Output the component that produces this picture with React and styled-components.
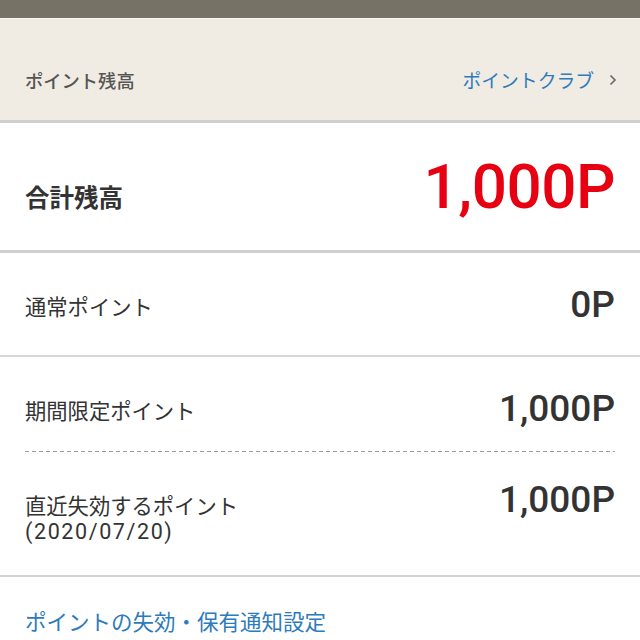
import React from "react";
import styled, { createGlobalStyle } from "styled-components";

const Global = createGlobalStyle`
  html, body { margin: 0; padding: 0; background: #fff; }
  body { font-family: "Noto Sans CJK JP", "Noto Sans", sans-serif; }
`;

const Page = styled.div`
  width: 640px;
  height: 640px;
  overflow: hidden;
  display: flex;
  flex-direction: column;
`;

const TopBar = styled.div`
  height: 18px;
  background: #777266;
  border-bottom: 1px solid #f9f6f0;
  flex-shrink: 0;
`;

const Header = styled.div`
  height: 104px;
  background: #f1ece3;
  display: flex;
  align-items: flex-end;
  justify-content: space-between;
  padding: 0 25px 27px 25px;
  box-sizing: border-box;
  border-bottom: 3px solid #cfcfcf;
  flex-shrink: 0;
`;

const HeaderTitle = styled.div`
  font-size: 18.3px;
  color: #555;
  font-weight: 500;
  line-height: 26px;
`;

const ClubLink = styled.a`
  font-size: 18.8px;
  color: #2d7bbb;
  line-height: 26px;
  display: flex;
  align-items: center;
  gap: 15px;
  text-decoration: none;
`;

const Chevron = styled.svg`
  width: 8px;
  height: 12px;
  margin-right: -2px;
`;

const Row = styled.div`
  height: ${(p) => p.$h}px;
  box-sizing: border-box;
  display: flex;
  justify-content: space-between;
  align-items: ${(p) => (p.$start ? "flex-start" : "center")};
  padding: ${(p) => p.$pt || 0}px 25px 0 25px;
  border-bottom: ${(p) => p.$border || "none"};
  flex-shrink: 0;
`;

const TotalLabel = styled.div`
  font-size: 24.5px;
  font-weight: 700;
  color: #333;
  line-height: 30px;
  margin-top: 20px;
`;

const TotalValue = styled.div`
  font-family: Roboto, "Liberation Sans", sans-serif;
  font-size: 62px;
  color: #e60012;
  font-weight: 500;
  line-height: 1;
  letter-spacing: -0.5px;
`;

const Label = styled.div`
  font-size: 21.3px;
  color: #333;
  line-height: 25px;
  margin-top: ${(p) => p.$mt || 0}px;
`;

const DateText = styled.span`
  font-family: Roboto, "Liberation Sans", sans-serif;
  font-size: 21.5px;
  letter-spacing: 1.6px;
`;

const Value = styled.div`
  font-family: Roboto, "Liberation Sans", sans-serif;
  font-size: 37px;
  font-weight: 500;
  color: #333;
  line-height: 1;
  margin-top: ${(p) => p.$mt || 0}px;
`;

const Dashed = styled.div`
  margin: 0 25px;
  height: 1px;
  background-image: linear-gradient(to right, #9a9a9a 57%, transparent 57%);
  background-size: 7px 1px;
  flex-shrink: 0;
`;

const FooterLink = styled.a`
  display: block;
  padding: 31px 25px 0 25px;
  font-size: 21.5px;
  color: #2d7bbb;
  text-decoration: none;
  line-height: 26px;
`;

export default function App() {
  return (
    <Page>
      <Global />
      <TopBar />
      <Header>
        <HeaderTitle>ポイント残高</HeaderTitle>
        <ClubLink>
          ポイントクラブ
          <Chevron viewBox="0 0 8 12">
            <path d="M1.5 1.5 L6 6 L1.5 10.5" fill="none" stroke="#666" strokeWidth="1.6" />
          </Chevron>
        </ClubLink>
      </Header>
      <Row $h={130} $border="3px solid #d0d0d0">
        <TotalLabel>合計残高</TotalLabel>
        <TotalValue>1,000P</TotalValue>
      </Row>
      <Row $h={104} $border="2px solid #d6d6d6">
        <Label $mt={3}>通常ポイント</Label>
        <Value>0P</Value>
      </Row>
      <Row $h={94} $pt={9}>
        <Label $mt={2}>期間限定ポイント</Label>
        <Value>1,000P</Value>
      </Row>
      <Dashed />
      <Row $h={125} $start $pt={40} $border="2px solid #d3d3d3">
        <Label>
          直近失効するポイント
          <br />
          <DateText>(2020/07/20)</DateText>
        </Label>
        <Value $mt={-11}>1,000P</Value>
      </Row>
      <FooterLink>ポイントの失効・保有通知設定</FooterLink>
    </Page>
  );
}
